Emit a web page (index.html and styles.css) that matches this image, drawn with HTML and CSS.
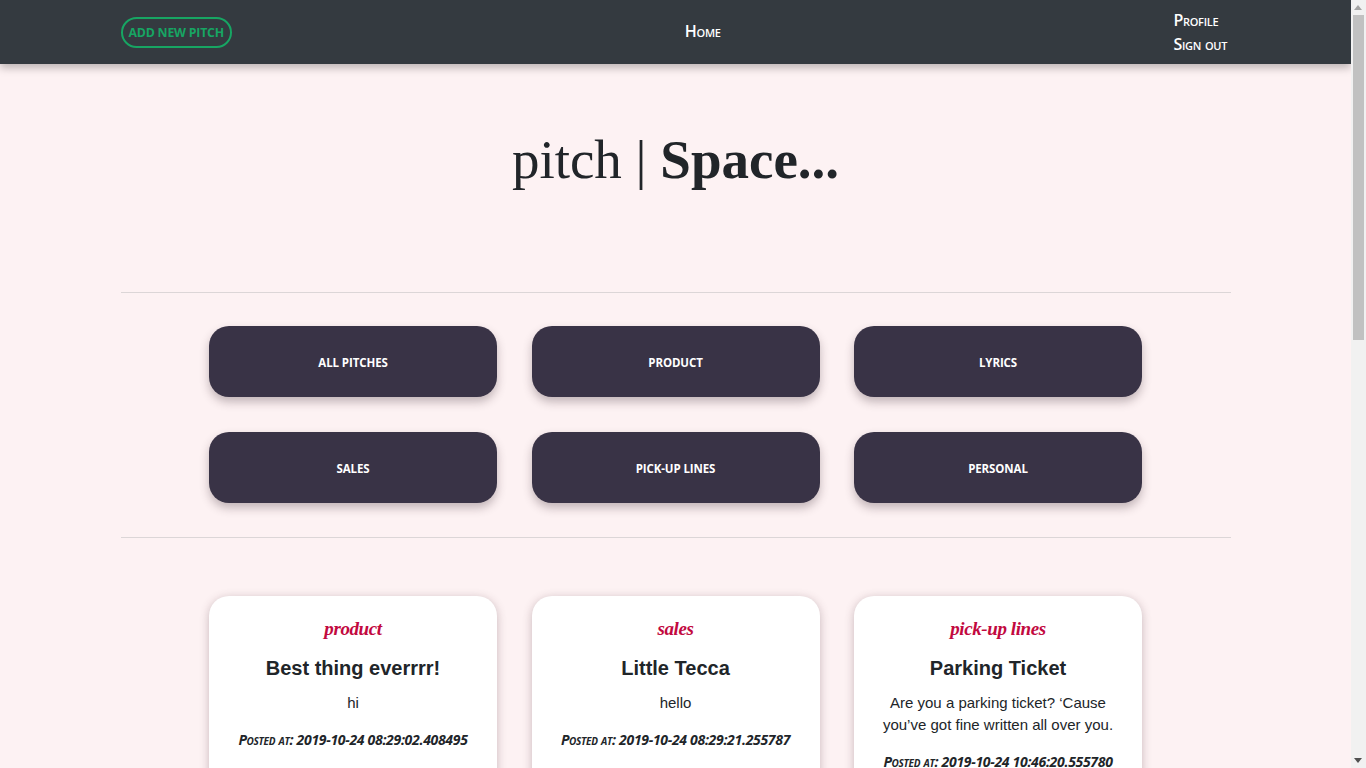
FILE: index.html
```html
<!DOCTYPE html>
<html>
<head>
<meta charset="utf-8">
<title>pitch | Space</title>
<link rel="stylesheet" href="styles.css">
</head>
<body>
<nav class="navbar">
  <div class="nav-inner">
    <a class="btn-add" href="#">ADD NEW PITCH</a>
    <a class="nav-link nav-home" href="#">Home</a>
    <div class="nav-right">
      <a class="nav-link" href="#">Profile</a>
      <a class="nav-link" href="#">Sign out</a>
    </div>
  </div>
</nav>
<main class="container">
  <header class="hero">
    <h1 class="title">pitch | <b>Space...</b></h1>
  </header>
  <hr class="rule">
  <section class="cats">
    <a class="cat" href="#">ALL PITCHES</a>
    <a class="cat" href="#">PRODUCT</a>
    <a class="cat" href="#">LYRICS</a>
    <a class="cat" href="#">SALES</a>
    <a class="cat" href="#">PICK-UP LINES</a>
    <a class="cat" href="#">PERSONAL</a>
  </section>
  <hr class="rule">
  <section class="cards">
    <article class="card">
      <div class="card-cat">product</div>
      <h2 class="card-title">Best thing everrrr!</h2>
      <p class="card-body">hi</p>
      <p class="card-date">Posted at: 2019-10-24 08:29:02.408495</p>
    </article>
    <article class="card">
      <div class="card-cat">sales</div>
      <h2 class="card-title">Little Tecca</h2>
      <p class="card-body">hello</p>
      <p class="card-date">Posted at: 2019-10-24 08:29:21.255787</p>
    </article>
    <article class="card">
      <div class="card-cat">pick-up lines</div>
      <h2 class="card-title">Parking Ticket</h2>
      <p class="card-body">Are you a parking ticket? ‘Cause you’ve got fine written all over you.</p>
      <p class="card-date">Posted at: 2019-10-24 10:46:20.555780</p>
    </article>
  </section>
</main>
<div class="scrollbar" aria-hidden="true">
  <span class="sb-up"></span>
  <span class="sb-thumb"></span>
  <span class="sb-down"></span>
</div>
</body>
</html>
```

FILE: styles.css
```css
* { box-sizing: border-box; }
body {
  margin: 0 15px 0 0;
  background: #fdf2f3;
  color: #212529;
  font-family: "Liberation Sans", Arial, sans-serif;
  font-size: 15px;
}
a { text-decoration: none; }

.navbar {
  background: #343a40;
  height: 64px;
  box-shadow: 0 4px 8px rgba(0,0,0,0.25);
  position: relative;
  z-index: 2;
}
.nav-inner {
  width: 1110px;
  margin: 0 auto;
  height: 100%;
  display: flex;
  justify-content: space-between;
  align-items: center;
}
.btn-add {
  display: inline-block;
  border: 2px solid #17a563;
  color: #17a563;
  border-radius: 16px;
  height: 31px;
  line-height: 27px;
  padding: 0 6px;
  margin-top: 1px;
  font-family: "Open Sans", sans-serif;
  font-weight: 700;
  font-size: 12.3px;
  letter-spacing: -0.2px;
}
.nav-link {
  color: #fff;
  font-family: "Open Sans", sans-serif;
  font-weight: 600;
  font-variant: small-caps;
  font-size: 16px;
  letter-spacing: -0.3px;
  line-height: 24px;
}
.nav-home { position: relative; top: -1px; }
.nav-right {
  display: flex;
  flex-direction: column;
  width: 57px;
  margin-top: 0;
}

.container {
  width: 1110px;
  margin: 0 auto;
  padding-bottom: 60px;
}
.hero {
  height: 228px;
  display: flex;
  justify-content: center;
  padding-top: 64px;
}
.title {
  margin: 0;
  font-family: "Liberation Serif", "Times New Roman", serif;
  font-weight: 400;
  font-size: 55px;
  line-height: 64px;
  color: #212529;
}
.title b { font-weight: 700; }

.rule {
  border: 0;
  border-top: 1px solid #dcd6d7;
  margin: 0;
}
.cats {
  width: 933px;
  margin: 33px auto 34px;
  display: grid;
  grid-template-columns: repeat(3, 288px);
  column-gap: 34.5px;
  row-gap: 35px;
}
.cat {
  height: 71px;
  border-radius: 20px;
  background: #393346;
  color: #fff;
  display: flex;
  align-items: center;
  justify-content: center;
  padding-top: 2px;
  font-family: "Open Sans", sans-serif;
  font-weight: 700;
  font-size: 11.5px;
  letter-spacing: -0.1px;
  box-shadow: 0 5px 10px rgba(60,40,50,0.3);
}
.cards {
  width: 933px;
  margin: 58px auto 0;
  display: grid;
  grid-template-columns: repeat(3, 288px);
  column-gap: 34.5px;
  align-items: start;
}
.card {
  background: #fff;
  border-radius: 20px;
  box-shadow: 0 2px 10px rgba(80,50,60,0.3);
  text-align: center;
  padding: 19px 20px 40px;
}
.card-cat {
  font-family: "Liberation Serif", serif;
  font-style: italic;
  font-weight: 700;
  color: #c2093f;
  font-size: 19px;
  line-height: 28px;
  letter-spacing: -0.4px;
}
.card-title {
  margin: 12px 0 0;
  font-size: 20px;
  font-weight: 700;
  line-height: 26px;
}
.card-body {
  margin: 11px 0 0;
  line-height: 22px;
}
.card-date {
  margin: 15px 0 0;
  font-family: "Open Sans", sans-serif;
  font-style: italic;
  font-weight: 700;
  font-variant: small-caps;
  font-size: 14px;
  letter-spacing: -0.3px;
  line-height: 22px;
}

.scrollbar {
  position: fixed;
  top: 0;
  right: 0;
  width: 15px;
  height: 100vh;
  background: #f1f1f1;
  z-index: 5;
}
.sb-up, .sb-down {
  position: absolute;
  left: 3px;
  width: 0;
  height: 0;
  border-left: 4.5px solid transparent;
  border-right: 4.5px solid transparent;
}
.sb-up { top: 5px; border-bottom: 5px solid #a3a3a3; }
.sb-down { bottom: 5px; border-top: 5px solid #505050; }
.sb-thumb {
  position: absolute;
  top: 15px;
  left: 2px;
  width: 11px;
  height: 325px;
  background: #c1c1c1;
}
```
